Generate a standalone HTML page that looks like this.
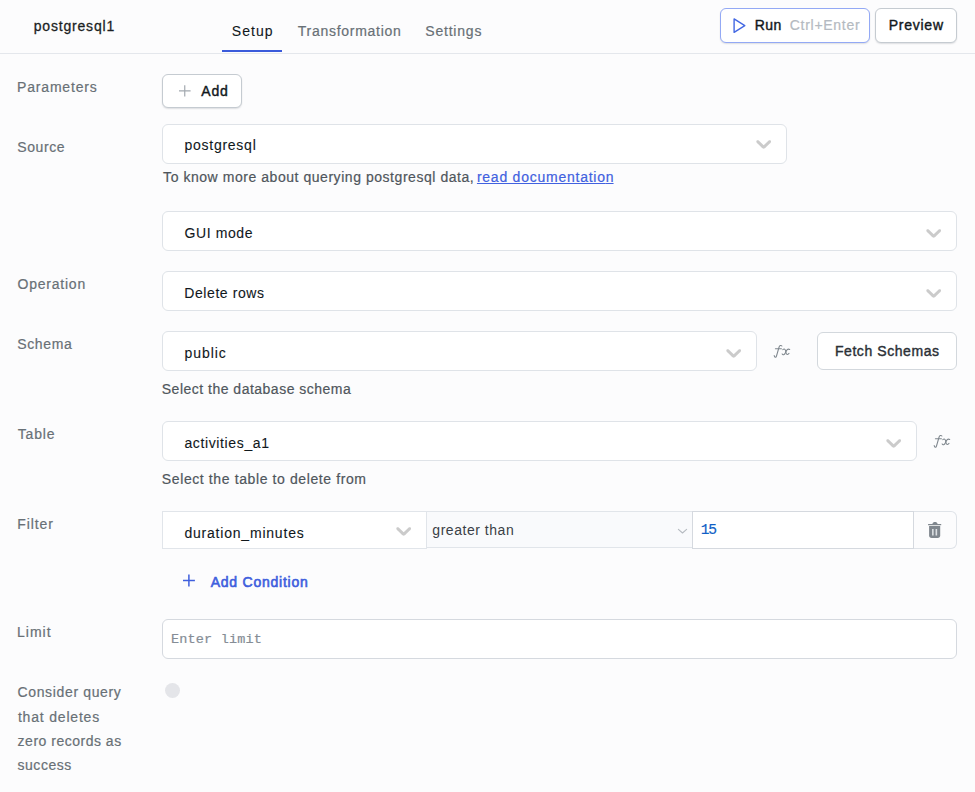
<!DOCTYPE html>
<html>
<head>
<meta charset="utf-8">
<title>postgresql1</title>
<style>
*{box-sizing:border-box;margin:0;padding:0}
html,body{width:975px;height:792px;overflow:hidden;background:#fcfcfd;font-family:"Liberation Sans",sans-serif;font-size:14px;color:#11181c}
.abs{position:absolute}
.t{position:absolute;white-space:nowrap;line-height:20px;height:20px}
.lnk{color:#4161e0;text-decoration:underline;text-underline-offset:1px;text-decoration-thickness:1px}
.box{position:absolute;background:#fff;border:1px solid #dfe3e8;border-radius:6px}
.btn{position:absolute;background:#fff;border:1px solid #c5cbd1;border-radius:6px;box-shadow:0 1px 1.5px rgba(16,24,40,.13)}
.chev{position:absolute;width:25.4px;height:25.4px}
.fx{position:absolute;font-family:"Liberation Serif",serif;font-style:italic;color:#7e868c;font-size:16px;line-height:20px;height:20px;white-space:nowrap;letter-spacing:1px}
</style>
</head>
<body>
<!-- header -->
<div class="abs" style="left:0;top:53px;width:975px;height:1px;background:#e4e7ec"></div>
<div class="abs" style="left:222px;top:50px;width:60px;height:2px;background:#3b5bdb"></div>

<div class="btn" id="b_run" style="left:720px;top:8px;width:150px;height:35px;border-color:#93a9f5"></div>
<svg class="abs" id="play" style="left:731px;top:16px" width="18" height="20" viewBox="0 0 18 20"><path d="M3.1 2.9 L13.8 9.6 L3.1 16.3 Z" fill="none" stroke="#4368e3" stroke-width="1.4" stroke-linejoin="round"/></svg>
<div class="btn" id="b_prev" style="left:875px;top:8px;width:82px;height:35px"></div>

<!-- parameters -->
<div class="btn" id="b_add" style="left:162px;top:74px;width:80px;height:34px"></div>
<svg class="abs" id="plus1" style="left:178px;top:84px" width="14" height="14" viewBox="0 0 14 14"><path d="M6.75 1.2V12.6M1 6.9H12.6" stroke="#a3a9b0" stroke-width="1.2" fill="none"/></svg>

<!-- source -->
<div class="box" style="left:162px;top:124px;width:625px;height:40px"></div>
<svg class="chev" style="left:751.4px;top:131.400px" viewBox="0 0 20 20"><path fill="#cbcbcb" d="M4.516 7.548c0.436-0.446 1.043-0.481 1.576 0l3.908 3.747 3.908-3.747c0.533-0.481 1.141-0.446 1.574 0 0.436 0.445 0.408 1.197 0 1.615-0.406 0.418-4.695 4.502-4.695 4.502-0.217 0.223-0.502 0.335-0.787 0.335s-0.57-0.112-0.789-0.335c0 0-4.287-4.084-4.695-4.502s-0.436-1.17 0-1.615z"/></svg>

<!-- gui mode -->
<div class="box" style="left:162px;top:211px;width:795px;height:40px"></div>
<svg class="chev" style="left:921.4px;top:219.5px" viewBox="0 0 20 20"><path fill="#cbcbcb" d="M4.516 7.548c0.436-0.446 1.043-0.481 1.576 0l3.908 3.747 3.908-3.747c0.533-0.481 1.141-0.446 1.574 0 0.436 0.445 0.408 1.197 0 1.615-0.406 0.418-4.695 4.502-4.695 4.502-0.217 0.223-0.502 0.335-0.787 0.335s-0.57-0.112-0.789-0.335c0 0-4.287-4.084-4.695-4.502s-0.436-1.17 0-1.615z"/></svg>

<!-- operation -->
<div class="box" style="left:162px;top:271px;width:795px;height:40px"></div>
<svg class="chev" style="left:921.4px;top:279.5px" viewBox="0 0 20 20"><path fill="#cbcbcb" d="M4.516 7.548c0.436-0.446 1.043-0.481 1.576 0l3.908 3.747 3.908-3.747c0.533-0.481 1.141-0.446 1.574 0 0.436 0.445 0.408 1.197 0 1.615-0.406 0.418-4.695 4.502-4.695 4.502-0.217 0.223-0.502 0.335-0.787 0.335s-0.57-0.112-0.789-0.335c0 0-4.287-4.084-4.695-4.502s-0.436-1.17 0-1.615z"/></svg>

<!-- schema -->
<div class="box" style="left:162px;top:331px;width:595px;height:40px"></div>
<svg class="chev" style="left:721.4px;top:339.5px" viewBox="0 0 20 20"><path fill="#cbcbcb" d="M4.516 7.548c0.436-0.446 1.043-0.481 1.576 0l3.908 3.747 3.908-3.747c0.533-0.481 1.141-0.446 1.574 0 0.436 0.445 0.408 1.197 0 1.615-0.406 0.418-4.695 4.502-4.695 4.502-0.217 0.223-0.502 0.335-0.787 0.335s-0.57-0.112-0.789-0.335c0 0-4.287-4.084-4.695-4.502s-0.436-1.17 0-1.615z"/></svg>
<svg class="abs" id="fx1" style="left:770px;top:342px" width="22" height="20" viewBox="0 0 22 20"><g fill="none" stroke="#7f878e" stroke-width="1.05" stroke-linecap="round" stroke-linejoin="round"><path d="M11.9,4.0 C11.3,3.2 9.7,3.100 9.1,5.0 L6.5,14.0 C6.0,15.9 4.6,15.500 4.2,13.600"/><path d="M5.4,6.700 H11.4"/><path d="M12.8,7.600 C14.2,6.600 15.4,7.0 15.700,9.300 C16.0,12.0 16.8,13.600 19.0,11.400"/><path d="M12.1,11.900 C12.8,13.400 14.4,13.200 15.700,10.200 C16.600,7.700 17.900,6.400 19.700,7.500"/></g></svg>
<div class="btn" id="b_fetch" style="left:817px;top:332px;width:140px;height:38px;box-shadow:none;border-color:#d3d8dd"></div>

<!-- table -->
<div class="box" style="left:162px;top:421px;width:755px;height:40px"></div>
<svg class="chev" style="left:881.4px;top:429.5px" viewBox="0 0 20 20"><path fill="#cbcbcb" d="M4.516 7.548c0.436-0.446 1.043-0.481 1.576 0l3.908 3.747 3.908-3.747c0.533-0.481 1.141-0.446 1.574 0 0.436 0.445 0.408 1.197 0 1.615-0.406 0.418-4.695 4.502-4.695 4.502-0.217 0.223-0.502 0.335-0.787 0.335s-0.57-0.112-0.789-0.335c0 0-4.287-4.084-4.695-4.502s-0.436-1.17 0-1.615z"/></svg>
<svg class="abs" id="fx2" style="left:930px;top:432px" width="22" height="20" viewBox="0 0 22 20"><g fill="none" stroke="#7f878e" stroke-width="1.05" stroke-linecap="round" stroke-linejoin="round"><path d="M11.9,4.0 C11.3,3.2 9.7,3.100 9.1,5.0 L6.5,14.0 C6.0,15.9 4.6,15.500 4.2,13.600"/><path d="M5.4,6.700 H11.4"/><path d="M12.8,7.600 C14.2,6.600 15.4,7.0 15.700,9.300 C16.0,12.0 16.8,13.600 19.0,11.400"/><path d="M12.1,11.900 C12.8,13.400 14.4,13.200 15.700,10.200 C16.600,7.700 17.900,6.400 19.700,7.500"/></g></svg>

<!-- filter -->
<div class="abs" style="left:913px;top:511px;width:44px;height:38px;background:#fcfcfd;border:1px solid #dfe3e8;border-left:none;border-radius:0 6px 6px 0"></div>
<div class="abs" style="left:426px;top:511px;width:267px;height:37px;background:#f9fafc;border:1px solid #e1e5ea"></div>
<div class="abs" style="left:162px;top:511px;width:265px;height:38px;background:#fff;border:1px solid #e1e5ea"></div>
<svg class="chev" style="left:391.2px;top:517.8px" viewBox="0 0 20 20"><path fill="#cbcbcb" d="M4.516 7.548c0.436-0.446 1.043-0.481 1.576 0l3.908 3.747 3.908-3.747c0.533-0.481 1.141-0.446 1.574 0 0.436 0.445 0.408 1.197 0 1.615-0.406 0.418-4.695 4.502-4.695 4.502-0.217 0.223-0.502 0.335-0.787 0.335s-0.57-0.112-0.789-0.335c0 0-4.287-4.084-4.695-4.502s-0.436-1.17 0-1.615z"/></svg>
<svg class="abs" id="schev" style="left:676px;top:527px" width="13" height="8" viewBox="0 0 13 8"><path d="M2.400 2.400 L6.500 6.0 L10.600 2.400" fill="none" stroke="#b5bac0" stroke-width="1.100" stroke-linecap="round" stroke-linejoin="round"/></svg>
<div class="abs" style="left:692px;top:511px;width:222px;height:38px;background:#fff;border:1px solid #d5d9df"></div>
<svg class="abs" id="trash" style="left:927px;top:521px" width="16" height="18" viewBox="0 0 16 18"><path d="M5.400 2.900 C5.800 1.600 6.600 1.0 8 1.0 C9.400 1.0 10.2 1.600 10.600 2.900 H14.2 V4.200 H1.100 V2.900 Z" fill="#7f868d"/><path d="M2.100 5.100 H13.2 V14.300 C13.2 16.100 12.300 17.0 10.600 17.0 H4.700 C3.0 17.0 2.100 16.100 2.100 14.300 Z" fill="#7f868d"/><path d="M5.850 8 V14.500 M9.350 8 V14.500" stroke="#dcdfe2" stroke-width="1.600"/></svg>

<svg class="abs" id="plus2" style="left:181px;top:574px" width="15" height="15" viewBox="0 0 15 15"><path d="M7.900 0.600 V12.500 M2 6.550 H13.900" stroke="#3f5fdd" stroke-width="1.500" fill="none"/></svg>

<!-- limit -->
<div class="box" style="left:162px;top:619px;width:795px;height:40px;border-color:#d5d9df"></div>

<!-- consider -->
<div class="abs" id="tog" style="left:164.7px;top:682.6px;width:15px;height:15px;border-radius:50%;background:#e4e5e9"></div>
<div class="t" id="title" style="left:33.69px;top:16.00px;font-size:14px;-webkit-text-stroke:0.28px currentColor;color:#1b1f24;letter-spacing:0.814px">postgresql1</div>
<div class="t" id="tab1" style="left:231.87px;top:21.00px;font-size:14px;-webkit-text-stroke:0.1px currentColor;color:#11181c;letter-spacing:1.006px">Setup</div>
<div class="t" id="tab2" style="left:297.73px;top:21.00px;font-size:14px;-webkit-text-stroke:0.2px currentColor;color:#687076;letter-spacing:0.733px">Transformation</div>
<div class="t" id="tab3" style="left:425.32px;top:21.00px;font-size:14px;-webkit-text-stroke:0.2px currentColor;color:#687076;letter-spacing:0.785px">Settings</div>
<div class="t" id="run" style="left:754.78px;top:15.00px;font-size:14px;-webkit-text-stroke:0.4px currentColor;color:#11181c;letter-spacing:0.450px">Run</div>
<div class="t" id="ctrl" style="left:789.80px;top:15.00px;font-size:14px;-webkit-text-stroke:0.2px currentColor;color:#b4bac1;letter-spacing:0.715px">Ctrl+Enter</div>
<div class="t" id="preview" style="left:888.66px;top:15.00px;font-size:14px;-webkit-text-stroke:0.4px currentColor;color:#11181c;letter-spacing:0.761px">Preview</div>
<div class="t" id="l_params" style="left:17.12px;top:77.00px;font-size:14px;-webkit-text-stroke:0.2px currentColor;color:#687076;letter-spacing:0.802px">Parameters</div>
<div class="t" id="add" style="left:201.20px;top:81.00px;font-size:14px;-webkit-text-stroke:0.4px currentColor;color:#11181c;letter-spacing:0.890px">Add</div>
<div class="t" id="l_source" style="left:17.32px;top:137.00px;font-size:14px;-webkit-text-stroke:0.2px currentColor;color:#687076;letter-spacing:0.561px">Source</div>
<div class="t" id="v_source" style="left:184.45px;top:135.00px;font-size:14px;-webkit-text-stroke:0.1px currentColor;color:#11181c;letter-spacing:0.748px">postgresql</div>
<div class="t" id="h_source" style="left:163.10px;top:167.00px;font-size:14px;-webkit-text-stroke:0.2px currentColor;color:#4f565c;letter-spacing:0.545px">To know more about querying postgresql data,</div>
<div class="t" id="h_link" style="left:476.92px;top:167.00px;font-size:14px;-webkit-text-stroke:0.2px currentColor;color:#4161e0;letter-spacing:0.758px"><span class="lnk">read documentatio<span style="letter-spacing:0">n</span></span></div>
<div class="t" id="v_gui" style="left:184.57px;top:223.00px;font-size:14px;-webkit-text-stroke:0.1px currentColor;color:#11181c;letter-spacing:0.592px">GUI mode</div>
<div class="t" id="l_op" style="left:17.62px;top:274.00px;font-size:14px;-webkit-text-stroke:0.2px currentColor;color:#687076;letter-spacing:0.765px">Operation</div>
<div class="t" id="v_op" style="left:184.31px;top:283.00px;font-size:14px;-webkit-text-stroke:0.1px currentColor;color:#11181c;letter-spacing:0.575px">Delete rows</div>
<div class="t" id="l_schema" style="left:17.32px;top:334.00px;font-size:14px;-webkit-text-stroke:0.2px currentColor;color:#687076;letter-spacing:0.603px">Schema</div>
<div class="t" id="v_schema" style="left:184.58px;top:343.00px;font-size:14px;-webkit-text-stroke:0.1px currentColor;color:#11181c;letter-spacing:0.902px">public</div>
<div class="t" id="fetch" style="left:834.95px;top:341.00px;font-size:14px;-webkit-text-stroke:0.4px currentColor;color:#2b3036;letter-spacing:0.567px">Fetch Schemas</div>
<div class="t" id="h_schema" style="left:161.79px;top:379.00px;font-size:14px;-webkit-text-stroke:0.2px currentColor;color:#4f565c;letter-spacing:0.493px">Select the database schema</div>
<div class="t" id="l_table" style="left:17.80px;top:424.00px;font-size:14px;-webkit-text-stroke:0.2px currentColor;color:#687076;letter-spacing:0.828px">Table</div>
<div class="t" id="v_table" style="left:184.40px;top:433.00px;font-size:14px;-webkit-text-stroke:0.1px currentColor;color:#11181c;letter-spacing:0.633px">activities_a1</div>
<div class="t" id="h_table" style="left:161.83px;top:469.00px;font-size:14px;-webkit-text-stroke:0.2px currentColor;color:#4f565c;letter-spacing:0.605px">Select the table to delete from</div>
<div class="t" id="l_filter" style="left:17.27px;top:514.00px;font-size:14px;-webkit-text-stroke:0.2px currentColor;color:#687076;letter-spacing:0.915px">Filter</div>
<div class="t" id="v_col" style="left:184.40px;top:523.00px;font-size:14px;-webkit-text-stroke:0.1px currentColor;color:#11181c;letter-spacing:0.795px">duration_minutes</div>
<div class="t" id="v_opr" style="left:432.32px;top:520.00px;font-size:14px;color:#3a3f46;letter-spacing:0.538px">greater than</div>
<div class="t" id="v_val" style="left:700.78px;top:520.00px;font-size:14.6px;-webkit-text-stroke:0.2px currentColor;font-family:'Liberation Mono',monospace;color:#0f5fc6;letter-spacing:-1.285px">15</div>
<div class="t" id="addcond" style="left:210.73px;top:572.00px;font-size:14px;-webkit-text-stroke:0.62px currentColor;color:#3f5fdd;letter-spacing:0.755px">Add Condition</div>
<div class="t" id="l_limit" style="left:16.98px;top:622.00px;font-size:14px;-webkit-text-stroke:0.2px currentColor;color:#687076;letter-spacing:1.016px">Limit</div>
<div class="t" id="v_limit" style="left:170.98px;top:630.00px;font-size:13.5px;-webkit-text-stroke:0.2px currentColor;font-family:'Liberation Mono',monospace;color:#858d96;letter-spacing:0.181px">Enter limit</div>
<div class="t" id="l_c1" style="left:17.46px;top:682.00px;font-size:14px;-webkit-text-stroke:0.2px currentColor;color:#687076;letter-spacing:0.652px">Consider query</div>
<div class="t" id="l_c2" style="left:17.93px;top:707.00px;font-size:14px;-webkit-text-stroke:0.2px currentColor;color:#687076;letter-spacing:0.806px">that deletes</div>
<div class="t" id="l_c3" style="left:17.61px;top:731.00px;font-size:14px;-webkit-text-stroke:0.2px currentColor;color:#687076;letter-spacing:0.504px">zero records as</div>
<div class="t" id="l_c4" style="left:17.51px;top:755.00px;font-size:14px;-webkit-text-stroke:0.2px currentColor;color:#687076;letter-spacing:0.540px">success</div>
</body>
</html>
